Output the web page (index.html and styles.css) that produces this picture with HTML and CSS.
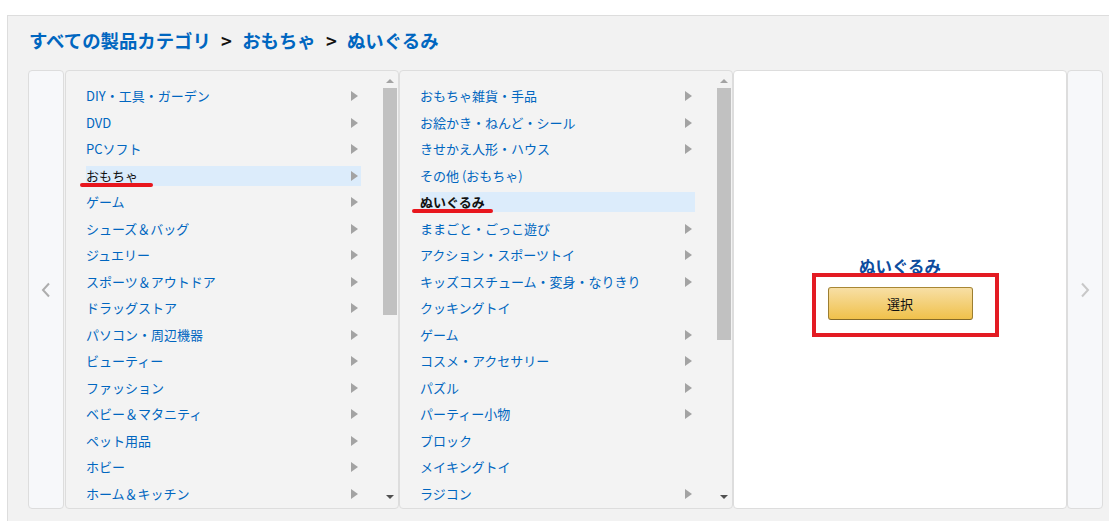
FILE: index.html
```html
<!DOCTYPE html>
<html lang="ja">
<head>
<meta charset="utf-8">
<title>すべての製品カテゴリ &gt; おもちゃ &gt; ぬいぐるみ</title>
<link rel="stylesheet" href="styles.css">
</head>
<body>
<div class="topbar"></div>
<div class="main">
    <h1 class="crumbs">
        <a href="#">すべての製品カテゴリ</a>
        <span class="sep">&gt;</span>
        <a href="#">おもちゃ</a>
        <span class="sep">&gt;</span>
        <a href="#">ぬいぐるみ</a>
    </h1>

    <div class="browser">
        <div class="nav">
            <svg width="10" height="16" viewBox="0 0 10 16"><polyline points="8,1.5 2,8 8,14.5" fill="none" stroke="#adadad" stroke-width="2"/></svg>
        </div>

        <!-- 1列目 -->
        <div class="col">
            <ul class="list">
                <li class="has-sub"><a href="#">DIY・工具・ガーデン</a></li>
                <li class="has-sub"><a href="#">DVD</a></li>
                <li class="has-sub"><a href="#">PCソフト</a></li>
                <li class="has-sub on"><a href="#">おもちゃ</a><span class="mark mark1"></span></li>
                <li class="has-sub"><a href="#">ゲーム</a></li>
                <li class="has-sub"><a href="#">シューズ＆バッグ</a></li>
                <li class="has-sub"><a href="#">ジュエリー</a></li>
                <li class="has-sub"><a href="#">スポーツ＆アウトドア</a></li>
                <li class="has-sub"><a href="#">ドラッグストア</a></li>
                <li class="has-sub"><a href="#">パソコン・周辺機器</a></li>
                <li class="has-sub"><a href="#">ビューティー</a></li>
                <li class="has-sub"><a href="#">ファッション</a></li>
                <li class="has-sub"><a href="#">ベビー＆マタニティ</a></li>
                <li class="has-sub"><a href="#">ペット用品</a></li>
                <li class="has-sub"><a href="#">ホビー</a></li>
                <li class="has-sub"><a href="#">ホーム＆キッチン</a></li>
            </ul>
            <div class="scroll">
                <span class="up"></span>
                <div class="track"><div class="thumb thumb1"></div></div>
                <span class="down"></span>
            </div>
        </div>

        <!-- 2列目 -->
        <div class="col">
            <ul class="list">
                <li class="has-sub"><a href="#">おもちゃ雑貨・手品</a></li>
                <li class="has-sub"><a href="#">お絵かき・ねんど・シール</a></li>
                <li class="has-sub"><a href="#">きせかえ人形・ハウス</a></li>
                <li><a href="#">その他 (おもちゃ)</a></li>
                <li class="on leaf"><a href="#">ぬいぐるみ</a><span class="mark mark2"></span></li>
                <li class="has-sub"><a href="#">ままごと・ごっこ遊び</a></li>
                <li class="has-sub"><a href="#">アクション・スポーツトイ</a></li>
                <li class="has-sub"><a href="#">キッズコスチューム・変身・なりきり</a></li>
                <li><a href="#">クッキングトイ</a></li>
                <li class="has-sub"><a href="#">ゲーム</a></li>
                <li class="has-sub"><a href="#">コスメ・アクセサリー</a></li>
                <li class="has-sub"><a href="#">パズル</a></li>
                <li class="has-sub"><a href="#">パーティー小物</a></li>
                <li><a href="#">ブロック</a></li>
                <li><a href="#">メイキングトイ</a></li>
                <li class="has-sub"><a href="#">ラジコン</a></li>
            </ul>
            <div class="scroll">
                <span class="up"></span>
                <div class="track"><div class="thumb thumb2"></div></div>
                <span class="down"></span>
            </div>
        </div>

        <!-- 選択パネル -->
        <div class="col picked">
            <div class="picked-name">ぬいぐるみ</div>
            <div class="pick">
                <button class="btn">選択</button>
                <span class="box"></span>
            </div>
        </div>

        <div class="nav">
            <svg width="10" height="16" viewBox="0 0 10 16"><polyline points="2,1.5 8,8 2,14.5" fill="none" stroke="#c8c8c8" stroke-width="2"/></svg>
        </div>
    </div>
</div>
</body>
</html>
```

FILE: styles.css
```css
html, body {
    margin: 0;
    padding: 0;
    background: #ffffff;
    font-family: "Noto Sans CJK JP", "Liberation Sans", sans-serif;
    overflow: hidden;
}
.topbar {
    height: 15px;
    background: #ffffff;
}
.main {
    box-sizing: border-box;
    margin-left: 7px;
    border-top: 1px solid #dddddd;
    border-left: 1px solid #dddddd;
    background: #f2f2f2;
    padding: 11px 0 0 20px;
    height: 506px;
}
.crumbs {
    margin: 0 0 17px 0;
    font-size: 18.4px;
    line-height: 26px;
    font-weight: bold;
    padding-left: 1px;
}
.crumbs a {
    color: #0066c0;
    text-decoration: none;
}
.crumbs .sep {
    color: #111111;
    margin: 0 6px;
}

.browser {
    display: flex;
    height: 439px;
}
.nav {
    width: 34px;
    background: #f7f8fa;
    border: 1px solid #dddddd;
    border-radius: 4px;
    display: flex;
    align-items: center;
    justify-content: center;
    margin-right: 1px;
}
.nav:last-child {
    margin-right: 0;
}
.col {
    width: 332px;
    background: #f3f3f3;
    border: 1px solid #dddddd;
    border-radius: 4px;
    display: flex;
    overflow: hidden;
}
.list {
    list-style: none;
    margin: 0;
    padding: 15px 21px 0 20px;
    flex: 1;
}
.list li {
    position: relative;
    height: 20px;
    line-height: 20px;
    margin-bottom: 6.53px;
    font-size: 13px;
    white-space: nowrap;
}
.list li a {
    color: #0066c0;
    text-decoration: none;
}
.list li.has-sub::after {
    content: "";
    position: absolute;
    right: 3px;
    top: 5px;
    border-left: 7px solid #a3a3a3;
    border-top: 5.5px solid transparent;
    border-bottom: 5.5px solid transparent;
}
.list li.on {
    background: #dcecfb;
}
.list li.on a {
    color: #111111;
}
.list li.leaf a {
    font-weight: bold;
}
/* 赤い下線（注釈） */
.mark {
    position: absolute;
    top: 17px;
    height: 4px;
    border-radius: 2px;
    background: #e8161d;
}
.mark1 {
    left: -6px;
    width: 73px;
}
.mark2 {
    left: -8px;
    width: 81px;
}

.scroll {
    width: 15px;
    margin-right: 1px;
    display: flex;
    flex-direction: column;
    align-items: center;
}
.scroll .up {
    margin-top: 8px;
    border-bottom: 4px solid #a3a3a3;
    border-left: 4px solid transparent;
    border-right: 4px solid transparent;
}
.scroll .track {
    flex: 1;
    width: 100%;
    margin: 5px 0;
}
.thumb {
    background: #c1c1c1;
    width: 14px;
    margin-left: 1px;
}
.thumb1 {
    height: 227px;
}
.thumb2 {
    height: 252px;
}
.scroll .down {
    margin-bottom: 9px;
    border-top: 4px solid #505050;
    border-left: 4px solid transparent;
    border-right: 4px solid transparent;
}

.picked {
    background: #ffffff;
    flex-direction: column;
    align-items: center;
    justify-content: center;
}
.picked-name {
    font-size: 16.5px;
    font-weight: bold;
    color: #0d4c9e;
    line-height: 20px;
    margin-bottom: 11px;
    margin-top: -4px;
}
.pick {
    position: relative;
}
.btn {
    display: block;
    width: 145px;
    height: 33px;
    font-family: "Noto Sans CJK JP", sans-serif;
    font-size: 13px;
    color: #111111;
    background: linear-gradient(to bottom, #f7dfa5, #f0c14b);
    border: 1px solid;
    border-color: #a88734 #9c7e31 #846a29;
    border-radius: 3px;
    padding: 0;
}
/* 赤枠（注釈） */
.box {
    position: absolute;
    left: -16px;
    top: -14px;
    right: -26px;
    bottom: -17px;
    border: 4px solid #e31b23;
}
```
